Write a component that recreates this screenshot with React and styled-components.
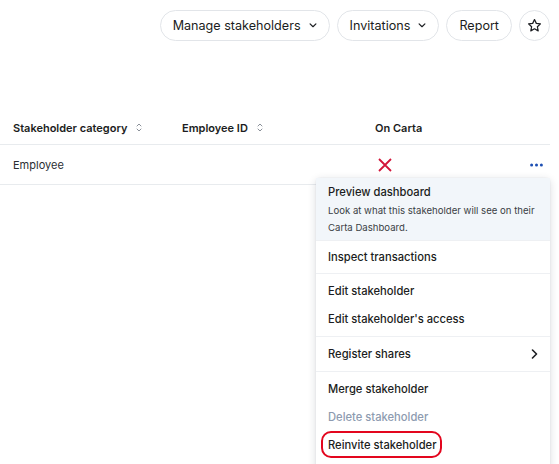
import React from "react";
import styled, { createGlobalStyle } from "styled-components";

const Global = createGlobalStyle`
  html, body { margin: 0; padding: 0; background: #fff; }
  body { font-family: Inter, "Noto Sans", sans-serif; color: #1b1d21; -webkit-font-smoothing: antialiased; }
  * { box-sizing: border-box; }
`;

const Page = styled.div`
  position: relative;
  width: 559px;
  height: 464px;
  overflow: hidden;
`;

const Toolbar = styled.div`
  display: flex;
  justify-content: flex-end;
  gap: 7px;
  padding: 10px 9px 0 0;
`;

const PillButton = styled.button`
  display: flex;
  align-items: center;
  gap: 8px;
  height: 31px;
  padding: 0 ${(p) => (p.$icon ? "0" : "12px")};
  width: ${(p) => (p.$icon ? "31px" : "auto")};
  justify-content: center;
  border: 1px solid #e2e5e9;
  border-radius: 16px;
  background: #fff;
  font-family: Inter, sans-serif;
  font-size: 12.6px;
  color: #1b1d21;
  cursor: pointer;
`;

const Table = styled.div`
  margin-top: 70px;
  width: 550px;
`;

const Row = styled.div`
  display: grid;
  grid-template-columns: 169px 193px 1fr 40px;
  align-items: center;
  height: ${(p) => (p.$head ? "34px" : "40px")};
  border-bottom: 1px solid #e8ebee;
`;

const HeadCell = styled.div`
  display: flex;
  align-items: center;
  gap: 9px;
  padding-left: 13px;
  font-size: 11px;
  font-weight: 600;
  color: #1b1d21;
`;

const Cell = styled.div`
  display: flex;
  align-items: center;
  justify-content: ${(p) => (p.$end ? "flex-end" : "flex-start")};
  padding-left: ${(p) => (p.$end ? "0" : p.$indent || "13px")};
  padding-right: ${(p) => (p.$end ? "7px" : "0")};
  font-size: 11px;
  color: #2b2e33;
`;

const Menu = styled.div`
  position: absolute;
  left: 316px;
  top: 178px;
  width: 234px;
  background: #fff;
  border-radius: 4px;
  box-shadow: 0 2px 8px rgba(20, 30, 50, 0.16), 0 0 1px rgba(20, 30, 50, 0.2);
  padding-bottom: 20px;
`;

const Group = styled.div`
  padding: ${(p) => p.$pad || "3px"} 0;
  border-bottom: ${(p) => (p.$last ? "none" : "1px solid #eef0f3")};
`;

const PreviewItem = styled.div`
  background: #f2f6fa;
  padding: 4px 12px 4px;
  border-bottom: 1px solid #eef0f3;
`;

const ItemTitle = styled.div`
  font-size: 11.2px;
  font-weight: 500;
  line-height: 20px;
  color: #1b1d21;
`;

const ItemDesc = styled.div`
  font-size: 9.6px;
  line-height: 17px;
  color: #3a3e45;
  white-space: nowrap;
`;

const Item = styled.div`
  position: relative;
  display: flex;
  align-items: center;
  justify-content: space-between;
  height: 28px;
  padding: 0 12px;
  font-size: 11.2px;
  font-weight: 500;
  color: ${(p) => (p.$disabled ? "#8d9bb0" : "#1b1d21")};
`;

const Highlight = styled.span`
  position: relative;
  &::after {
    content: "";
    position: absolute;
    left: -7px;
    right: -6px;
    top: -7px;
    bottom: -6px;
    border: 2px solid #e3061e;
    border-radius: 10px;
  }
`;

const Chevron = () => (
  <svg width="8" height="5" viewBox="0 0 9 6" fill="none">
    <path d="M1 1l3.5 3.5L8 1" stroke="#1b1d21" strokeWidth="1.4" strokeLinecap="round" strokeLinejoin="round" />
  </svg>
);

const Sort = () => (
  <svg width="6" height="9" viewBox="0 0 6 9" fill="none">
    <path d="M1 3l2-2 2 2M1 6l2 2 2-2" stroke="#8a9099" strokeWidth="1" strokeLinecap="round" strokeLinejoin="round" />
  </svg>
);

const Star = () => (
  <svg width="15" height="15" viewBox="0 0 24 24" fill="none">
    <path
      d="M12 2.5l2.9 6.1 6.6.8-4.9 4.6 1.3 6.6L12 17.3l-5.9 3.3 1.3-6.6-4.9-4.6 6.6-.8z"
      stroke="#1b1d21"
      strokeWidth="2"
      strokeLinejoin="round"
    />
  </svg>
);

const Cross = () => (
  <svg width="14" height="14" viewBox="0 0 14 14" fill="none">
    <path d="M1 1l12 12M13 1L1 13" stroke="#d3163a" strokeWidth="1.8" />
  </svg>
);

const Dots = () => (
  <svg width="13" height="4" viewBox="0 0 13 4">
    <circle cx="1.6" cy="2" r="1.5" fill="#1d4fb3" />
    <circle cx="6.5" cy="2" r="1.5" fill="#1d4fb3" />
    <circle cx="11.4" cy="2" r="1.5" fill="#1d4fb3" />
  </svg>
);

const ChevronRight = () => (
  <svg width="7" height="10" viewBox="0 0 7 10" fill="none">
    <path d="M1.5 1l4 4-4 4" stroke="#1b1d21" strokeWidth="1.6" strokeLinecap="round" strokeLinejoin="round" />
  </svg>
);

export default function App() {
  return (
    <Page>
      <Global />
      <Toolbar>
        <PillButton>
          Manage stakeholders <Chevron />
        </PillButton>
        <PillButton>
          Invitations <Chevron />
        </PillButton>
        <PillButton>Report</PillButton>
        <PillButton $icon aria-label="Favorite">
          <Star />
        </PillButton>
      </Toolbar>

      <Table>
        <Row $head>
          <HeadCell>
            Stakeholder category <Sort />
          </HeadCell>
          <HeadCell>
            Employee ID <Sort />
          </HeadCell>
          <HeadCell>On Carta</HeadCell>
          <HeadCell />
        </Row>
        <Row>
          <Cell>Employee</Cell>
          <Cell />
          <Cell $indent="16px">
            <Cross />
          </Cell>
          <Cell $end>
            <Dots />
          </Cell>
        </Row>
      </Table>

      <Menu>
        <PreviewItem>
          <ItemTitle>Preview dashboard</ItemTitle>
          <ItemDesc>Look at what this stakeholder will see on their</ItemDesc>
          <ItemDesc>Carta Dashboard.</ItemDesc>
        </PreviewItem>
        <Group $pad="2px">
          <Item>Inspect transactions</Item>
        </Group>
        <Group>
          <Item>Edit stakeholder</Item>
          <Item>Edit stakeholder's access</Item>
        </Group>
        <Group>
          <Item>
            Register shares <ChevronRight />
          </Item>
        </Group>
        <Group $last>
          <Item>Merge stakeholder</Item>
          <Item $disabled>Delete stakeholder</Item>
          <Item>
            <Highlight>Reinvite stakeholder</Highlight>
          </Item>
        </Group>
      </Menu>
    </Page>
  );
}
